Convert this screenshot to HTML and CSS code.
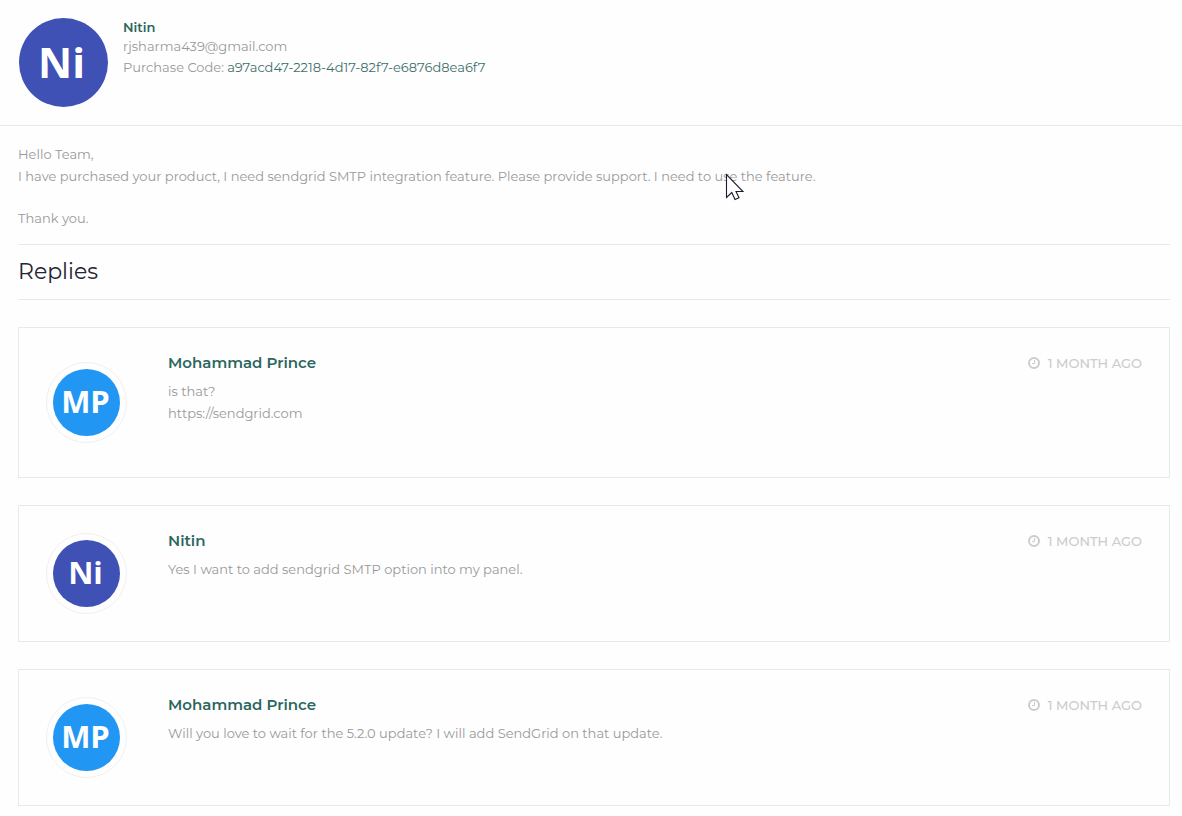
FILE: index.html
```html
<!DOCTYPE html>
<html lang="en">
<head>
<meta charset="utf-8">
<meta name="viewport" content="width=device-width, initial-scale=1">
<title>Support ticket</title>
<link rel="stylesheet" href="styles.css">
</head>
<body>
<svg class="sprite" aria-hidden="true">
  <symbol id="clock" viewBox="0 0 12 12">
    <circle cx="6" cy="6" r="5" fill="none" stroke="currentColor" stroke-width="2"/>
    <path d="M6.5 3v3.5H4" fill="none" stroke="currentColor" stroke-width="1"/>
  </symbol>
</svg>
<header class="customer">
  <div class="avatar avatar-large avatar-indigo">Ni</div>
  <div class="customer-info">
    <h1 class="customer-name">Nitin</h1>
    <p class="customer-email">rjsharma439@gmail.com</p>
    <p class="customer-code">Purchase Code: <span class="code">a97acd47-2218-4d17-82f7-e6876d8ea6f7</span></p>
  </div>
</header>
<main class="ticket">
  <div class="message">
    <p>Hello Team,<br>I have purchased your product, I need sendgrid SMTP integration feature. Please provide support. I need to use the feature.</p>
    <p>Thank you.</p>
    <svg class="cursor" viewBox="0 0 19 28" aria-hidden="true"><path d="M1.5 1.5V24.5L6.8 19.5L10 26.5L14 24.8L11 18.5H18Z" fill="#fff" stroke="#1c1c2b" stroke-width="1.1"/></svg>
  </div>
  <h2 class="replies-title">Replies</h2>
  <section class="replies">
    <article class="reply">
      <div class="ring"><div class="avatar avatar-blue">MP</div></div>
      <div class="reply-body">
        <div class="reply-head">
          <h3 class="reply-name">Mohammad Prince</h3>
          <span class="reply-time"><svg class="clock" aria-hidden="true"><use href="#clock"/></svg>1 MONTH AGO</span>
        </div>
        <p class="reply-text">is that?<br>https://sendgrid.com</p>
      </div>
    </article>
    <article class="reply">
      <div class="ring"><div class="avatar avatar-indigo">Ni</div></div>
      <div class="reply-body">
        <div class="reply-head">
          <h3 class="reply-name">Nitin</h3>
          <span class="reply-time"><svg class="clock" aria-hidden="true"><use href="#clock"/></svg>1 MONTH AGO</span>
        </div>
        <p class="reply-text">Yes I want to add sendgrid SMTP option into my panel.</p>
      </div>
    </article>
    <article class="reply">
      <div class="ring"><div class="avatar avatar-blue">MP</div></div>
      <div class="reply-body">
        <div class="reply-head">
          <h3 class="reply-name">Mohammad Prince</h3>
          <span class="reply-time"><svg class="clock" aria-hidden="true"><use href="#clock"/></svg>1 MONTH AGO</span>
        </div>
        <p class="reply-text">Will you love to wait for the 5.2.0 update? I will add SendGrid on that update.</p>
      </div>
    </article>
  </section>
</main>
</body>
</html>
```
FILE: styles.css
```css
* {
  box-sizing: border-box;
}

body,
h1,
h2,
h3,
p {
  margin: 0;
}

body {
  background: #fefefe;
  color: #999;
  font: 13px/22px Montserrat, "Open Sans", sans-serif;
}

.sprite {
  display: none;
}

.customer {
  display: flex;
  gap: 15px;
  padding: 18px 19px;
  border-bottom: 1px solid #e8e8e8;
}

.customer-info {
  min-width: 0;
}

.customer-name {
  color: #2a6660;
  font-size: 13px;
  font-weight: 600;
  line-height: 18px;
}

.customer-email {
  line-height: 20px;
}

.customer-code {
  overflow-wrap: anywhere;
}

.code {
  color: #3f6f6c;
}

.avatar {
  display: flex;
  align-items: center;
  justify-content: center;
  width: 67px;
  height: 67px;
  padding: 0 2px 2px 0;
  border-radius: 50%;
  color: #fff;
  font-family: "Open Sans", sans-serif;
  font-size: 31px;
  font-weight: 700;
  line-height: 1;
}

.avatar-large {
  flex: none;
  width: 89px;
  height: 89px;
  padding-right: 4px;
  font-size: 42px;
}

.avatar-indigo {
  background: #4051b5;
}

.avatar-blue {
  background: #2296f3;
}

.ticket {
  padding: 17px 12px 10px 18px;
}

.message {
  position: relative;
  display: grid;
  gap: 20px;
  padding-bottom: 15px;
}

.cursor {
  position: absolute;
  top: 30px;
  left: 707px;
  width: 19px;
  height: 28px;
}

.replies-title {
  padding: 12px 0;
  border: solid #e4ebea;
  border-width: 1px 0;
  color: #212632;
  font-size: 22px;
  font-weight: 400;
  line-height: 30px;
}

.replies {
  display: grid;
  gap: 27px;
  padding-top: 27px;
}

.reply {
  display: flex;
  gap: 41px;
  padding: 27px;
  border: 1px solid #e4ebea;
}

.ring {
  flex: none;
  align-self: center;
  padding: 6px;
  border: 1px solid #f0f0f0;
  border-radius: 50%;
}

.reply-body {
  flex: 1;
  min-width: 0;
}

.reply-head {
  display: flex;
  flex-wrap: wrap;
  justify-content: space-between;
  column-gap: 16px;
  line-height: 16px;
}

.reply-name {
  color: #2a6660;
  font-size: 15px;
  font-weight: 600;
}

.reply-time {
  display: flex;
  align-items: center;
  gap: 8px;
  color: #ccc;
  font-weight: 500;
}

.clock {
  width: 12px;
  height: 12px;
}

.reply-text {
  padding: 9px 0 26px;
  overflow-wrap: anywhere;
}
```
